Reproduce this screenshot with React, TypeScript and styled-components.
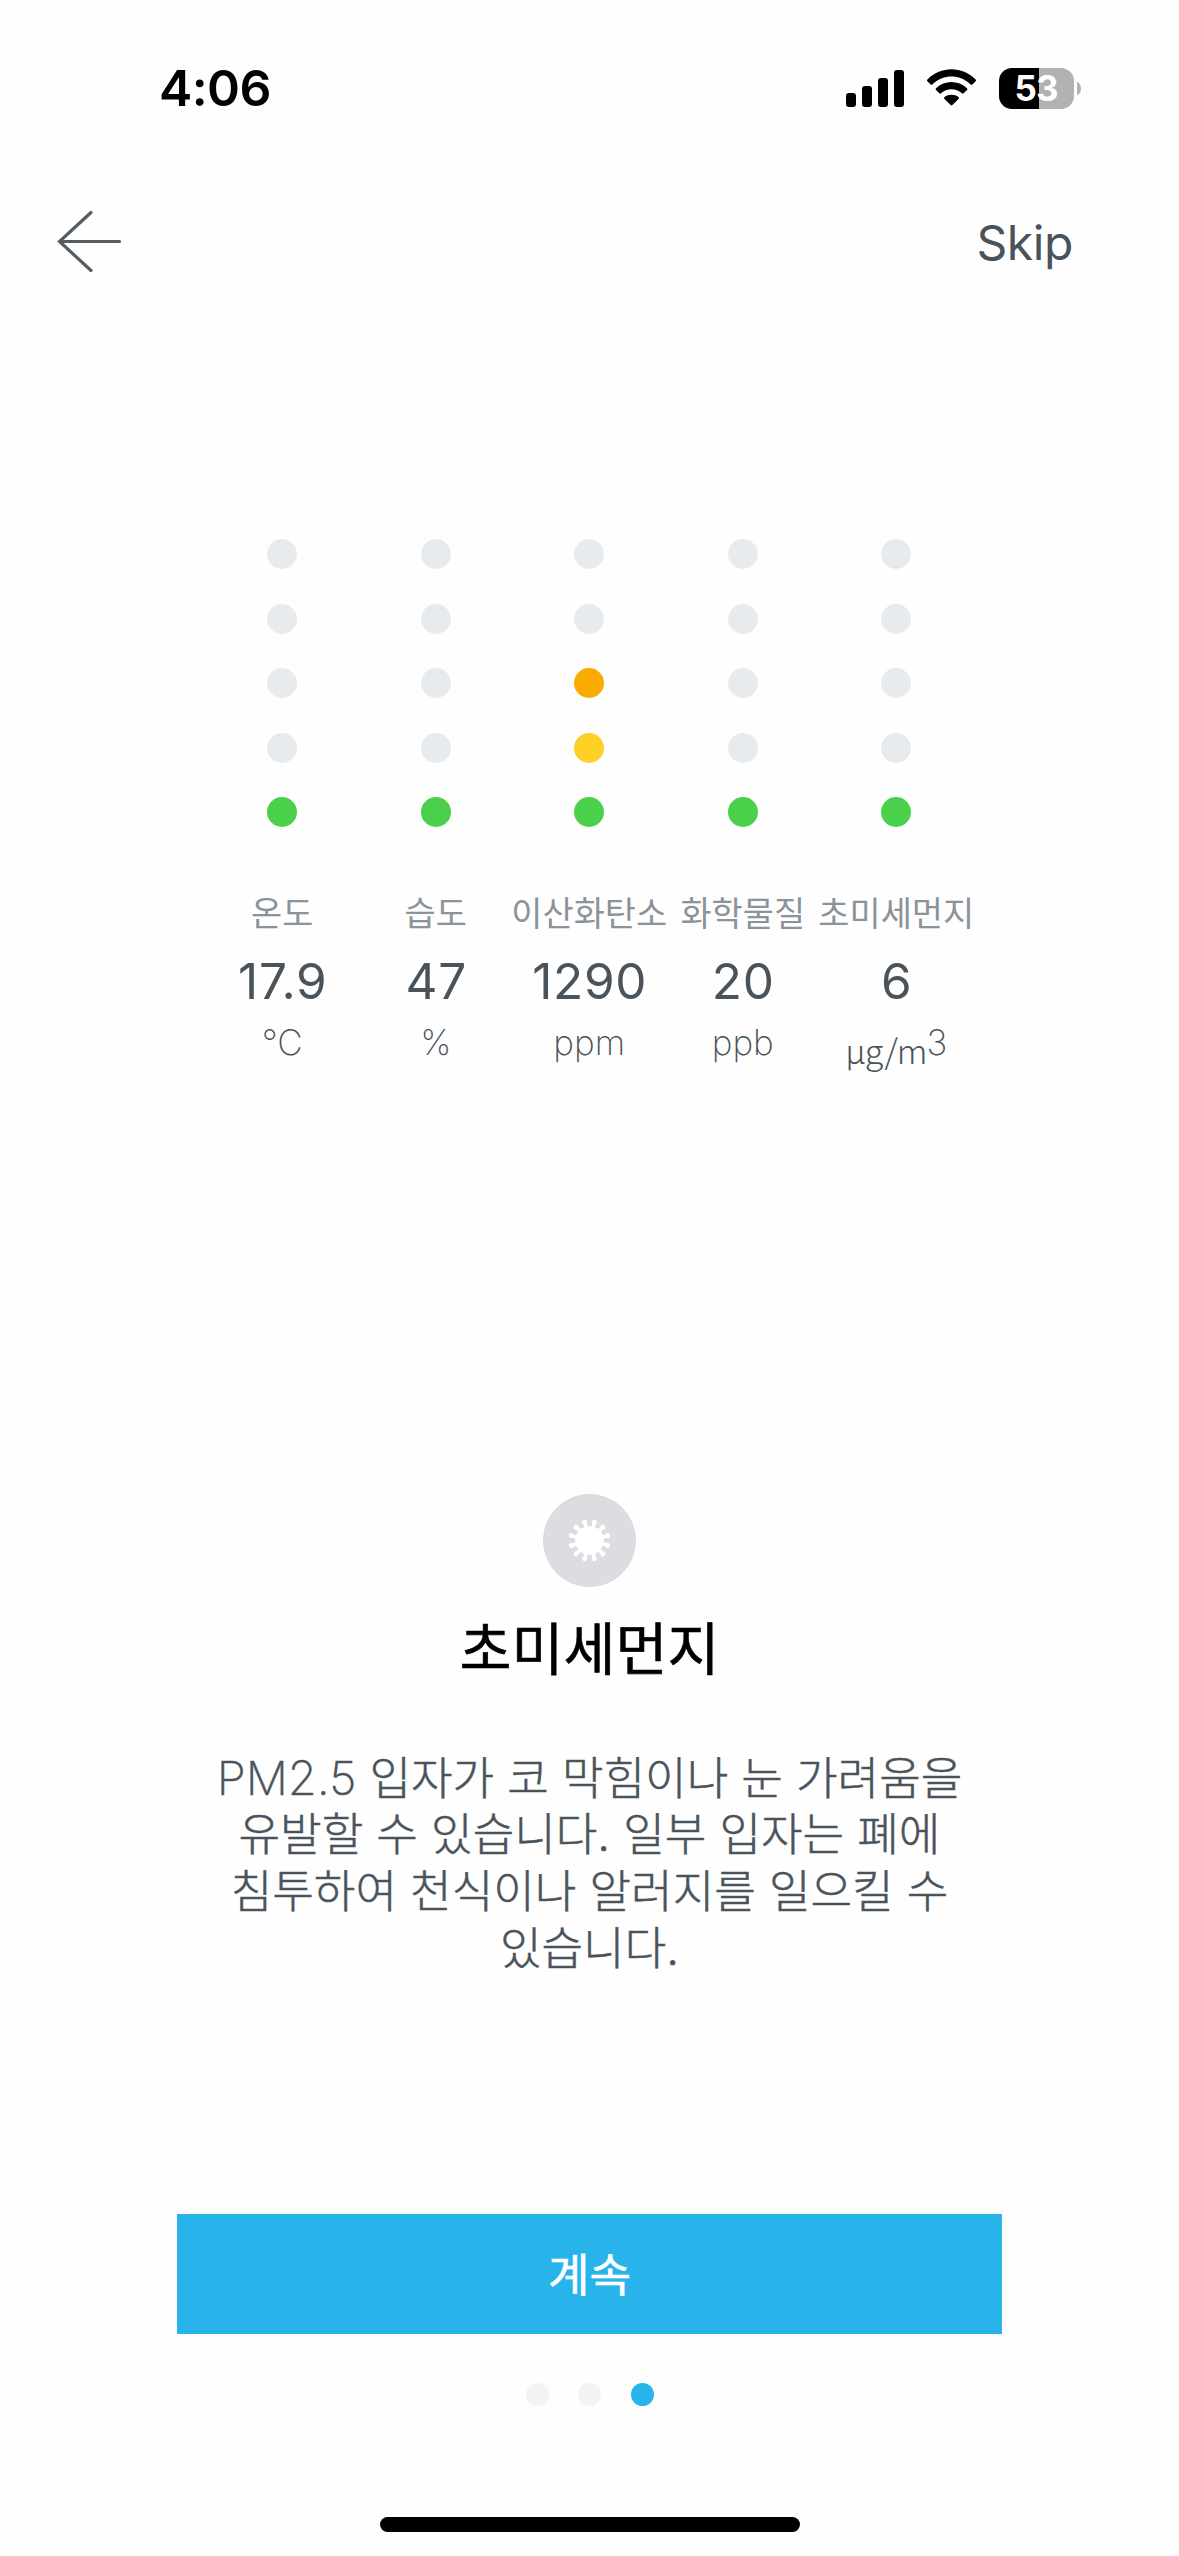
import React from "react";
import styled, { createGlobalStyle } from "styled-components";

const GlobalStyle = createGlobalStyle`
  body { margin: 0; background: #fefefe; }
  * { box-sizing: border-box; }
`;

const latin = `Inter, "Noto Sans CJK KR", sans-serif`;
const hangul = `"Noto Sans CJK KR", Inter, sans-serif`;

const Screen = styled.main`
  width: 1179px;
  height: 2556px;
  display: flex;
  flex-direction: column;
  align-items: center;
  overflow: hidden;
  background: #fefefe;
  font-family: ${latin};
  color: #4a535a;
  white-space: nowrap;
`;

const StatusBar = styled.header`
  width: 100%;
  height: 176px;
  padding: 58px 98px 0 159px;
  display: flex;
  justify-content: space-between;
  align-items: flex-start;
  color: #000;
`;

const Clock = styled.time`
  font-size: 50px;
  font-weight: 600;
  line-height: 60px;
  letter-spacing: -0.6px;
`;

const StatusIcons = styled.div`
  height: 60px;
  display: flex;
  align-items: center;
`;

const Signal = styled.div`
  height: 37px;
  display: flex;
  align-items: flex-end;
  gap: 6px;
`;

const SignalBar = styled.i<{ $height: number }>`
  width: 10px;
  height: ${(p) => p.$height}px;
  border-radius: 3px;
  background: #000;
`;

const WifiIcon = styled.svg`
  display: block;
  margin: 0 22px 0 22px;
`;

const Battery = styled.div`
  width: 75px;
  height: 41px;
  padding-right: 1px;
  border-radius: 13px;
  background: linear-gradient(to right, #000 40px, #b2b2b2 40px);
  color: #fff;
  font-size: 35px;
  font-weight: 700;
  line-height: 41px;
  letter-spacing: -1px;
  text-align: center;
`;

const BatteryTip = styled.i`
  width: 4px;
  height: 13px;
  margin-left: 3px;
  border-radius: 0 4px 4px 0 / 0 6.5px 6.5px 0;
  background: #b2b2b2;
`;

const NavBar = styled.nav`
  width: 100%;
  height: 132px;
  padding: 0 106px 0 56px;
  display: flex;
  justify-content: space-between;
  align-items: center;
`;

const PlainButton = styled.button`
  padding: 0;
  border: 0;
  background: none;
  color: inherit;
  font: 400 48px/58px ${latin};
  letter-spacing: -0.4px;
  svg { display: block; }
`;

const SkipLabel = styled.span`
  display: block;
  padding-top: 2px;
`;

const Readings = styled.section`
  width: 768px;
  margin-top: 231px;
  display: grid;
  grid-template-columns: repeat(5, 153.5px);
`;

const Reading = styled.div`
  display: flex;
  flex-direction: column;
  align-items: center;
`;

const Levels = styled.div`
  display: flex;
  flex-direction: column;
  gap: 34.5px;
`;

const Level = styled.i<{ $color: string }>`
  width: 30px;
  height: 30px;
  border-radius: 50%;
  background: ${(p) => p.$color};
`;

const ReadingLabel = styled.div`
  margin-top: 61px;
  font-family: ${hangul};
  font-size: 33.9px;
  font-weight: 400;
  line-height: 48px;
  color: #8b939a;
`;

const ReadingValue = styled.div`
  margin-top: 16px;
  padding-left: 1px;
  font-size: 49.5px;
  line-height: 58px;
  letter-spacing: 0.7px;
`;

const ReadingUnit = styled.div`
  display: flex;
  margin-top: 10px;
  height: 60px;
  font-size: 35px;
  font-weight: 200;
  line-height: 44px;
  color: #4a535a;
`;

const UnitBase = styled.span`
  margin-top: 8px;
  font-family: ${hangul};
  font-size: 34px;
  font-weight: 300;
  letter-spacing: -1px;
`;

const PollutantIcon = styled.svg`
  display: block;
  margin-top: 414px;
`;

const Title = styled.h1`
  margin: 16px 0 0;
  font: 400 56.5px/84px ${hangul};
  color: #000;
  -webkit-text-stroke: 0.6px #000;
`;

const Description = styled.p`
  margin: 62px 0 0;
  font-size: 45.2px;
  font-weight: 300;
  line-height: 57px;
  word-spacing: 0.4px;
  text-align: center;
  -webkit-text-stroke: 0.5px #4a535a;
`;

const Line = styled.span`
  display: block;
  height: 57px;
`;

const LatinRun = styled.span`
  font-size: 47px;
  font-weight: 250;
`;

const ContinueButton = styled.button`
  width: 825px;
  height: 120px;
  margin-top: 237px;
  padding: 0;
  border: 0;
  background: #28b4eb;
  color: #fff;
  font: 400 45px/118px ${hangul};
  -webkit-text-stroke: 0.6px #fff;
  span { display: block; height: 120px; }
`;

const Pager = styled.div`
  margin-top: 49px;
  display: flex;
  gap: 29.5px;
`;

const PageDot = styled.i<{ $active?: boolean }>`
  width: 23px;
  height: 23px;
  border-radius: 50%;
  background: ${(p) => (p.$active ? "#28b4eb" : "#f2f3f5")};
`;

const HomeIndicator = styled.div`
  width: 420px;
  height: 15px;
  margin-top: 111px;
  border-radius: 8px;
  background: #000;
`;

const OFF = "#e8ebee";
const GREEN = "#4bd04b";
const YELLOW = "#fdd128";
const ORANGE = "#fbaa02";

const base = [OFF, OFF, OFF, OFF, GREEN];

const readings: { label: string; value: string; unit: React.ReactNode; levels: string[] }[] = [
  { label: "온도", value: "17.9", unit: "℃", levels: base },
  { label: "습도", value: "47", unit: "%", levels: base },
  { label: "이산화탄소", value: "1290", unit: "ppm", levels: [OFF, OFF, ORANGE, YELLOW, GREEN] },
  { label: "화학물질", value: "20", unit: "ppb", levels: base },
  { label: "초미세먼지", value: "6", unit: <><UnitBase>µg/m</UnitBase><span>3</span></>, levels: base },
];

const spikes = Array.from({ length: 12 }, (_, i) => 15 + i * 30);

export default function App() {
  return (
    <Screen>
      <GlobalStyle />
      <StatusBar>
        <Clock>4:06</Clock>
        <StatusIcons>
          <Signal>
            {[14, 21, 29, 37].map((h) => <SignalBar key={h} $height={h} />)}
          </Signal>
          <WifiIcon width="51" height="38" viewBox="0 0 51 38">
            <path d="M1.4 10.4C15-3.1 36-3.1 49.6 10.4q.9.9 0 1.800l-3.200 3.200q-.9.900-1.800 0C33.500 5 17.500 5 6.400 15.400q-.9.900-1.800 0L1.400 12.200q-.9-.9 0-1.800z" />
            <path d="M10 19.200C18.500 11 32.500 11 41 19.200q.9.900 0 1.800l-3.300 3.300q-.9.900-1.800 0C30 19 21 19 15.100 24.300q-.9.900-1.800 0L10 21q-.9-.9 0-1.800z" />
            <path d="M18.500 28C22.200 24.900 28.800 24.900 32.500 28q1 .9 0 1.900l-6.100 6.200q-.9.900-1.800 0l-6.100-6.200q-1-1 0-1.900z" />
          </WifiIcon>
          <Battery>53</Battery>
          <BatteryTip />
        </StatusIcons>
      </StatusBar>

      <NavBar>
        <PlainButton aria-label="Back">
          <svg width="67" height="66" viewBox="0 0 67 66" fill="none" stroke="#545d63" strokeWidth="3.2" strokeLinecap="round">
            <path d="M35 3.500 3.500 32.500 35 61.500M3.500 32.500H63.500" />
          </svg>
        </PlainButton>
        <PlainButton><SkipLabel>Skip</SkipLabel></PlainButton>
      </NavBar>

      <Readings>
        {readings.map((r) => (
          <Reading key={r.label}>
            <Levels>
              {r.levels.map((color, i) => <Level key={i} $color={color} />)}
            </Levels>
            <ReadingLabel>{r.label}</ReadingLabel>
            <ReadingValue>{r.value}</ReadingValue>
            <ReadingUnit>{r.unit}</ReadingUnit>
          </Reading>
        ))}
      </Readings>

      <PollutantIcon width="93" height="93" viewBox="-46.5 -46.5 93 93">
        <circle r="46" fill="#dbdde0" stroke="#d7d9dc" />
        <circle r="14.3" fill="#fff" />
        {spikes.map((a) => (
          <g key={a} transform={`rotate(${a})`} fill="#fff">
            <path d="M-2.600-13Q-1.300-15-1.600-19H1.600Q1.300-15 2.600-13z" />
            <circle cy="-18.800" r="2.500" />
          </g>
        ))}
      </PollutantIcon>

      <Title>초미세먼지</Title>
      <Description>
        <Line><LatinRun>PM2.5</LatinRun> 입자가 코 막힘이나 눈 가려움을</Line>
        <Line>유발할 수 있습니다. 일부 입자는 폐에</Line>
        <Line>침투하여 천식이나 알러지를 일으킬 수</Line>
        <Line>있습니다.</Line>
      </Description>

      <ContinueButton><span>계속</span></ContinueButton>
      <Pager>
        <PageDot />
        <PageDot />
        <PageDot $active />
      </Pager>
      <HomeIndicator />
    </Screen>
  );
}
